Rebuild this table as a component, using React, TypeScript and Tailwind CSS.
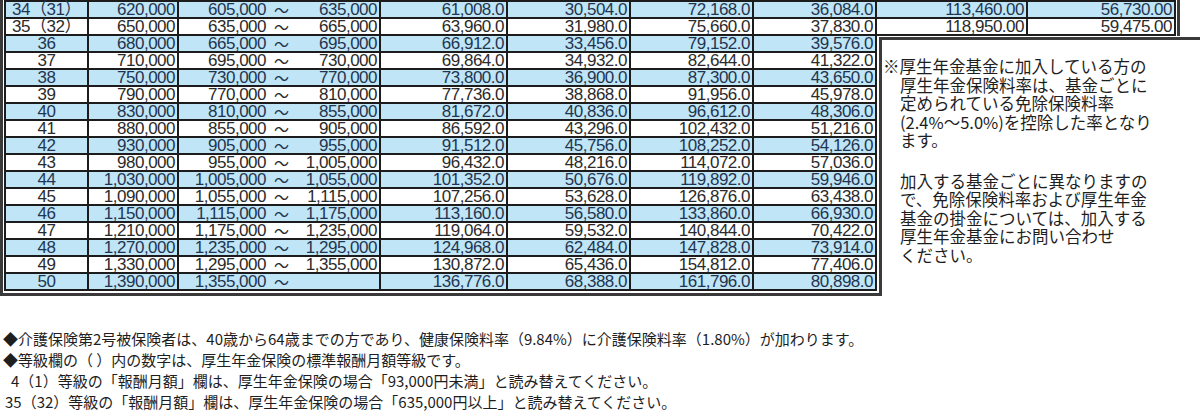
import React from 'react';

type Row = {
  grade: string;
  std: string;
  from: string;
  to: string;
  h1: string;
  h2: string;
  k1: string;
  k2: string;
  p1?: string;
  p2?: string;
};

const topRows: Row[] = [
  { grade: '34（31）', std: '620,000', from: '605,000', to: '635,000', h1: '61,008.0', h2: '30,504.0', k1: '72,168.0', k2: '36,084.0', p1: '113,460.00', p2: '56,730.00' },
  { grade: '35（32）', std: '650,000', from: '635,000', to: '665,000', h1: '63,960.0', h2: '31,980.0', k1: '75,660.0', k2: '37,830.0', p1: '118,950.00', p2: '59,475.00' },
];

const lowerRows: Row[] = [
  { grade: '36', std: '680,000', from: '665,000', to: '695,000', h1: '66,912.0', h2: '33,456.0', k1: '79,152.0', k2: '39,576.0' },
  { grade: '37', std: '710,000', from: '695,000', to: '730,000', h1: '69,864.0', h2: '34,932.0', k1: '82,644.0', k2: '41,322.0' },
  { grade: '38', std: '750,000', from: '730,000', to: '770,000', h1: '73,800.0', h2: '36,900.0', k1: '87,300.0', k2: '43,650.0' },
  { grade: '39', std: '790,000', from: '770,000', to: '810,000', h1: '77,736.0', h2: '38,868.0', k1: '91,956.0', k2: '45,978.0' },
  { grade: '40', std: '830,000', from: '810,000', to: '855,000', h1: '81,672.0', h2: '40,836.0', k1: '96,612.0', k2: '48,306.0' },
  { grade: '41', std: '880,000', from: '855,000', to: '905,000', h1: '86,592.0', h2: '43,296.0', k1: '102,432.0', k2: '51,216.0' },
  { grade: '42', std: '930,000', from: '905,000', to: '955,000', h1: '91,512.0', h2: '45,756.0', k1: '108,252.0', k2: '54,126.0' },
  { grade: '43', std: '980,000', from: '955,000', to: '1,005,000', h1: '96,432.0', h2: '48,216.0', k1: '114,072.0', k2: '57,036.0' },
  { grade: '44', std: '1,030,000', from: '1,005,000', to: '1,055,000', h1: '101,352.0', h2: '50,676.0', k1: '119,892.0', k2: '59,946.0' },
  { grade: '45', std: '1,090,000', from: '1,055,000', to: '1,115,000', h1: '107,256.0', h2: '53,628.0', k1: '126,876.0', k2: '63,438.0' },
  { grade: '46', std: '1,150,000', from: '1,115,000', to: '1,175,000', h1: '113,160.0', h2: '56,580.0', k1: '133,860.0', k2: '66,930.0' },
  { grade: '47', std: '1,210,000', from: '1,175,000', to: '1,235,000', h1: '119,064.0', h2: '59,532.0', k1: '140,844.0', k2: '70,422.0' },
  { grade: '48', std: '1,270,000', from: '1,235,000', to: '1,295,000', h1: '124,968.0', h2: '62,484.0', k1: '147,828.0', k2: '73,914.0' },
  { grade: '49', std: '1,330,000', from: '1,295,000', to: '1,355,000', h1: '130,872.0', h2: '65,436.0', k1: '154,812.0', k2: '77,406.0' },
  { grade: '50', std: '1,390,000', from: '1,355,000', to: '', h1: '136,776.0', h2: '68,388.0', k1: '161,796.0', k2: '80,898.0' },
];

const cell = 'h-full border-r-2 border-[#1c1c1c] pr-[2px] text-right';

const TableRow = ({ row, blue }: { row: Row; blue: boolean }) => (
  <div
    className={`flex h-[17px] border-b-2 border-l-2 border-[#1c1c1c] text-[17px] leading-[15px] tracking-[-0.5px] ${
      blue ? 'bg-[#bfe5f7] text-[#1f3550]' : 'bg-white text-[#2b2b2b]'
    }`}
  >
    <div className="h-full w-[83px] border-r-2 border-[#1c1c1c] text-center">{row.grade}</div>
    <div className={`${cell} w-[90px]`}>{row.std}</div>
    <div className="flex h-full w-[202px] border-r-2 border-[#1c1c1c]">
      <span className="w-[87px] text-right">{row.from}</span>
      <span className="pl-[8px] font-['Noto_Sans_CJK_JP',sans-serif] text-[15px] leading-[15px]">～</span>
      <span className="flex-1 pr-[2px] text-right">{row.to}</span>
    </div>
    <div className={`${cell} w-[127px]`}>{row.h1}</div>
    <div className={`${cell} w-[123px]`}>{row.h2}</div>
    <div className={`${cell} w-[123px]`}>{row.k1}</div>
    <div className={`${cell} w-[123px]`}>{row.k2}</div>
    {row.p1 && <div className={`${cell} w-[151px]`}>{row.p1}</div>}
    {row.p2 && <div className={`${cell} w-[148px]`}>{row.p2}</div>}
  </div>
);

export default function App() {
  return (
    <div className="h-[420px] w-[1200px] overflow-hidden bg-white font-['Liberation_Sans','Noto_Sans_CJK_JP',sans-serif]">
      {/* rows 34-35 span the full width */}
      <div className="w-fit border-x-[3px] border-[#3a3a3a] px-px">
        <div className="border-t-2 border-[#1c1c1c]">
          {topRows.map((r, i) => (
            <TableRow key={r.grade} row={r} blue={i % 2 === 0} />
          ))}
        </div>
      </div>

      {/* rows 36-50 with the note box on the right */}
      <div className="flex items-stretch">
        <div className="border-b-[3px] border-l-[3px] border-[#3a3a3a] pb-[2px] pl-px pr-[2px]">
          {lowerRows.map((r, i) => (
            <TableRow key={r.grade} row={r} blue={i % 2 === 0} />
          ))}
        </div>
        <div className="mt-px flex-1 border-l-[3px] border-t-[3px] border-[#3a3a3a] pl-px pt-[17px] font-['Noto_Sans_CJK_JP',sans-serif] text-[16.5px] leading-[18.5px] whitespace-nowrap text-[#1e1e1e]">
          <div>※厚生年金基金に加入している方の</div>
          <div className="pl-[17px]">
            <div>厚生年金保険料率は、基金ごとに</div>
            <div>定められている免除保険料率</div>
            <div>(2.4%～5.0%)を控除した率となり</div>
            <div>ます。</div>
            <div className="mt-[22px]">加入する基金ごとに異なりますの</div>
            <div>で、免除保険料率および厚生年金</div>
            <div>基金の掛金については、加入する</div>
            <div>厚生年金基金にお問い合わせ</div>
            <div>ください。</div>
          </div>
        </div>
      </div>

      {/* footnotes */}
      <div className="mt-[32px] pl-[3px] font-['Noto_Sans_CJK_JP',sans-serif] text-[15px] leading-[21px] whitespace-nowrap text-[#1e1e1e]">
        <div>◆介護保険第2号被保険者は、40歳から64歳までの方であり、健康保険料率（9.84%）に介護保険料率（1.80%）が加わります。</div>
        <div>◆等級欄の（ ）内の数字は、厚生年金保険の標準報酬月額等級です。</div>
        <div className="pl-[8px]">4（1）等級の「報酬月額」欄は、厚生年金保険の場合「93,000円未満」と読み替えてください。</div>
        <div className="pl-[2px]">35（32）等級の「報酬月額」欄は、厚生年金保険の場合「635,000円以上」と読み替えてください。</div>
      </div>
    </div>
  );
}
